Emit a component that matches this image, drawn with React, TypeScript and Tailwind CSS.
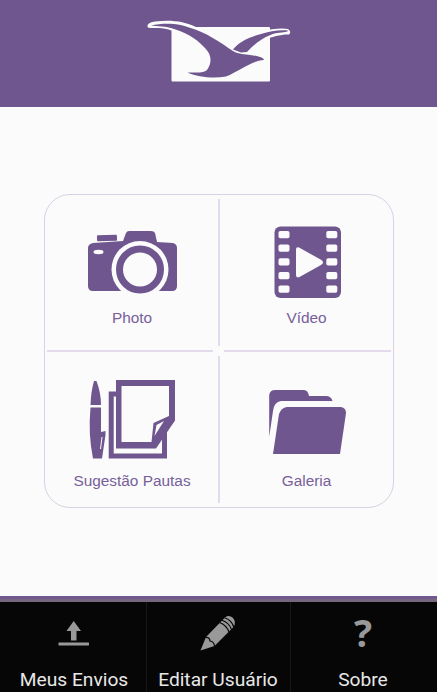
import type { ReactNode } from "react";

const BirdLogo = () => (
  <svg className="h-[70px] w-[150px]" viewBox="145 15 150 70" fill="none">
    <rect x="171.500" y="27" width="98.500" height="54.500" rx="1" fill="#fbfbfb" />
    <path
      d="M147.500 27Q146.500 22.500 155 21.500C170 19.500 184 21 196 27L200 34L182 34L171.500 30.500C165 27.500 156 28 151 28Q148 28 147.500 27Z"
      fill="#fbfbfb"
    />
    <path
      d="M262 31.500C270 29 282 27.500 288 29Q292 32 289 34.500C283 34 272 36.500 264 40Z"
      fill="#fbfbfb"
    />
    <path
      d="M151 25.500C164 22.500 180 23.500 189 27.500C206 32 221 43 233 51C239 54.500 245 54 250 55C257 56 263 57 264 60C251 61 241 70 226 76.500C213 79 198 77 187.500 72.500C193 72 203 74 207 70C212 63 212 55 205 48C195 37 184 32 174 29C166 26 157 26.500 151 25.500Z"
      fill="#6f568f"
    />
    <path
      d="M233 49.500C239 42 249 37 261 34C270 31 280 29.500 288 30.500C288 32 284 32 277 33C268 34.500 256 42 247 52L241 52.500Z"
      fill="#6f568f"
    />
  </svg>
);

const CameraIcon = () => (
  <svg className="h-[88px] w-[96px]" viewBox="84 220 96 88">
    <g fill="#6f568f">
      <rect x="97" y="235" width="20" height="6" rx="1" transform="rotate(-2 107 238)" />
      <path d="M93 243L123 241L126 233Q127 231 129 231H151Q154 231 155 233L157 242L173 243Q177 244 177 248V286Q177 291 172 291H93Q88 291 88 286V248Q88 244 93 243Z" />
    </g>
    <circle cx="140" cy="269.500" r="28.500" fill="#fbfbfb" />
    <circle cx="140" cy="269.500" r="20.500" fill="none" stroke="#6f568f" strokeWidth="7" />
    <ellipse cx="98.500" cy="252" rx="5" ry="2.200" fill="#fbfbfb" />
  </svg>
);

const VideoIcon = () => (
  <svg className="h-[88px] w-[96px]" viewBox="258 220 96 88">
    <rect x="274.500" y="226.500" width="66.500" height="71.500" rx="6" fill="#6f568f" />
    <g fill="#fbfbfb">
      {[231, 244.5, 258.3, 272, 285.5].map((y) => (
        <g key={y}>
          <rect x="278.500" y={y} width="11" height="7.300" rx="1.800" />
          <rect x="326.300" y={y} width="11" height="7.300" rx="1.800" />
        </g>
      ))}
      <path d="M296 249.500Q296 246.500 299 247.500L321 259.800Q325 262.500 321 265L299.500 277Q296 278.500 296 275Z" />
    </g>
  </svg>
);

const NotesIcon = () => (
  <svg className="h-[88px] w-[96px]" viewBox="84 376 96 88">
    <path
      d="M94 381H96.500Q101 393 101 405H90.500Q91 391 94 381ZM90.500 407.500H101V432L105.500 431V435L102 458.500H93Q88 434 90.500 407.500Z"
      fill="#6f568f"
    />
    <path d="M102 437L100.500 449" stroke="#fbfbfb" />
    <path d="M119 394H111.200V456H164.500V430" fill="none" stroke="#6f568f" strokeWidth="5" />
    <path d="M116 380H175V420.500L156 448.500H116Z" fill="#6f568f" />
    <path d="M121.500 386H169V416L153.500 423L151.500 442H121.500Z" fill="#fbfbfb" />
    <path d="M156.500 425L164 421L154.500 436Z" fill="#fbfbfb" />
  </svg>
);

const FolderIcon = () => (
  <svg className="h-[88px] w-[96px]" viewBox="258 376 96 88" fill="#6f568f">
    <path d="M269.200 437V395Q270 390 275 390H304Q308 390 309 396H326Q331 396 332.500 401H281Q274 402 273 411Z" />
    <path d="M287 407H341Q346 408 346 413L340 454H273L279 414Q281 408 287 407Z" />
  </svg>
);

const UploadIcon = () => (
  <svg className="h-10 w-10" viewBox="54 612 40 40" fill="#999">
    <path d="M73.700 621L81 631H76.500V640.500H71V631H66.500Z" />
    <rect x="58.500" y="642.500" width="30.500" height="3" rx=".5" />
  </svg>
);

const PencilIcon = () => (
  <svg className="h-10 w-10" viewBox="198 612 40 40">
    <path
      d="M200.500 650.500L206 637L225 617.500Q229 614.500 233 618Q236.500 622 233.500 627L214.500 646Z"
      fill="#999"
    />
    <path
      d="M205.500 637.500Q209.500 637 210 641Q214 641.500 214.500 646M219.500 622.500Q226.500 625 229 632M222 620.200Q229 622.500 231.500 629.500M224.500 617.800Q231.500 620 233.700 627"
      fill="none"
      stroke="#060606"
      strokeWidth="1.200"
    />
  </svg>
);

const tiles: { label: string; icon: ReactNode }[] = [
  { label: "Photo", icon: <CameraIcon /> },
  { label: "Vídeo", icon: <VideoIcon /> },
  { label: "Sugestão Pautas", icon: <NotesIcon /> },
  { label: "Galeria", icon: <FolderIcon /> },
];

const menuItems: { label: string; icon: ReactNode; align: string }[] = [
  { label: "Meus Envios", icon: <UploadIcon />, align: "pl-[2px] border-r border-[#171717]" },
  { label: "Editar Usuário", icon: <PencilIcon />, align: "pr-[1px] border-r border-[#171717]" },
  {
    label: "Sobre",
    icon: (
      <span className="h-10 font-['Open_Sans',sans-serif] text-[38px] leading-[40px] font-bold text-[#999]">
        ?
      </span>
    ),
    align: "pr-[2px]",
  },
];

const App = () => {
  return (
    <div className="flex h-[692px] w-[437px] flex-col overflow-hidden bg-[#fbfbfb]">
      <header className="flex h-[107px] shrink-0 justify-center bg-[#6f568f] pt-[15px] pl-[3px]">
        <BirdLogo />
      </header>

      <main className="flex h-[489px] shrink-0 justify-center pt-[87px] pl-px">
        <div className="relative grid h-[314px] w-[350px] grid-cols-2 grid-rows-2 rounded-[26px] border border-[#d9d1e4]">
          {tiles.map((tile, i) => (
            <button
              key={tile.label}
              className="flex flex-col items-center justify-start pt-[25px] font-['Liberation_Sans',sans-serif] text-[15.4px] leading-5 text-[#77609a]"
            >
              {tile.icon}
              <span className={`whitespace-nowrap ${i > 1 ? "mt-[7px]" : ""} ${i % 2 ? "pl-px" : ""}`}>
                {tile.label}
              </span>
            </button>
          ))}

          {/* Dividers, open in the middle */}
          <div className="absolute top-1 left-[173px] h-[147px] w-[2px] bg-[#e3dbeb]" />
          <div className="absolute bottom-1 left-[173px] h-[147px] w-[2px] bg-[#e3dbeb]" />
          <div className="absolute top-[155px] left-[2px] h-[2px] w-[166px] bg-[#e3dbeb]" />
          <div className="absolute top-[155px] right-[2px] h-[2px] w-[167px] bg-[#e3dbeb]" />
        </div>
      </main>

      <footer className="grid h-24 shrink-0 grid-cols-[147px_144px_146px] border-t-[3px] border-[#71598f] bg-[#060606]">
        {menuItems.map((item) => (
          <div key={item.label} className="border-t-[3px] border-[#74677e]">
            <button
              className={`flex h-full w-full flex-col items-center justify-start pt-[10px] font-[Roboto,sans-serif] text-[19.2px] leading-6 text-[#e8e8e8] ${item.align}`}
            >
              {item.icon}
              <span className="mt-4 whitespace-nowrap">{item.label}</span>
            </button>
          </div>
        ))}
      </footer>
    </div>
  );
};

export default App;
